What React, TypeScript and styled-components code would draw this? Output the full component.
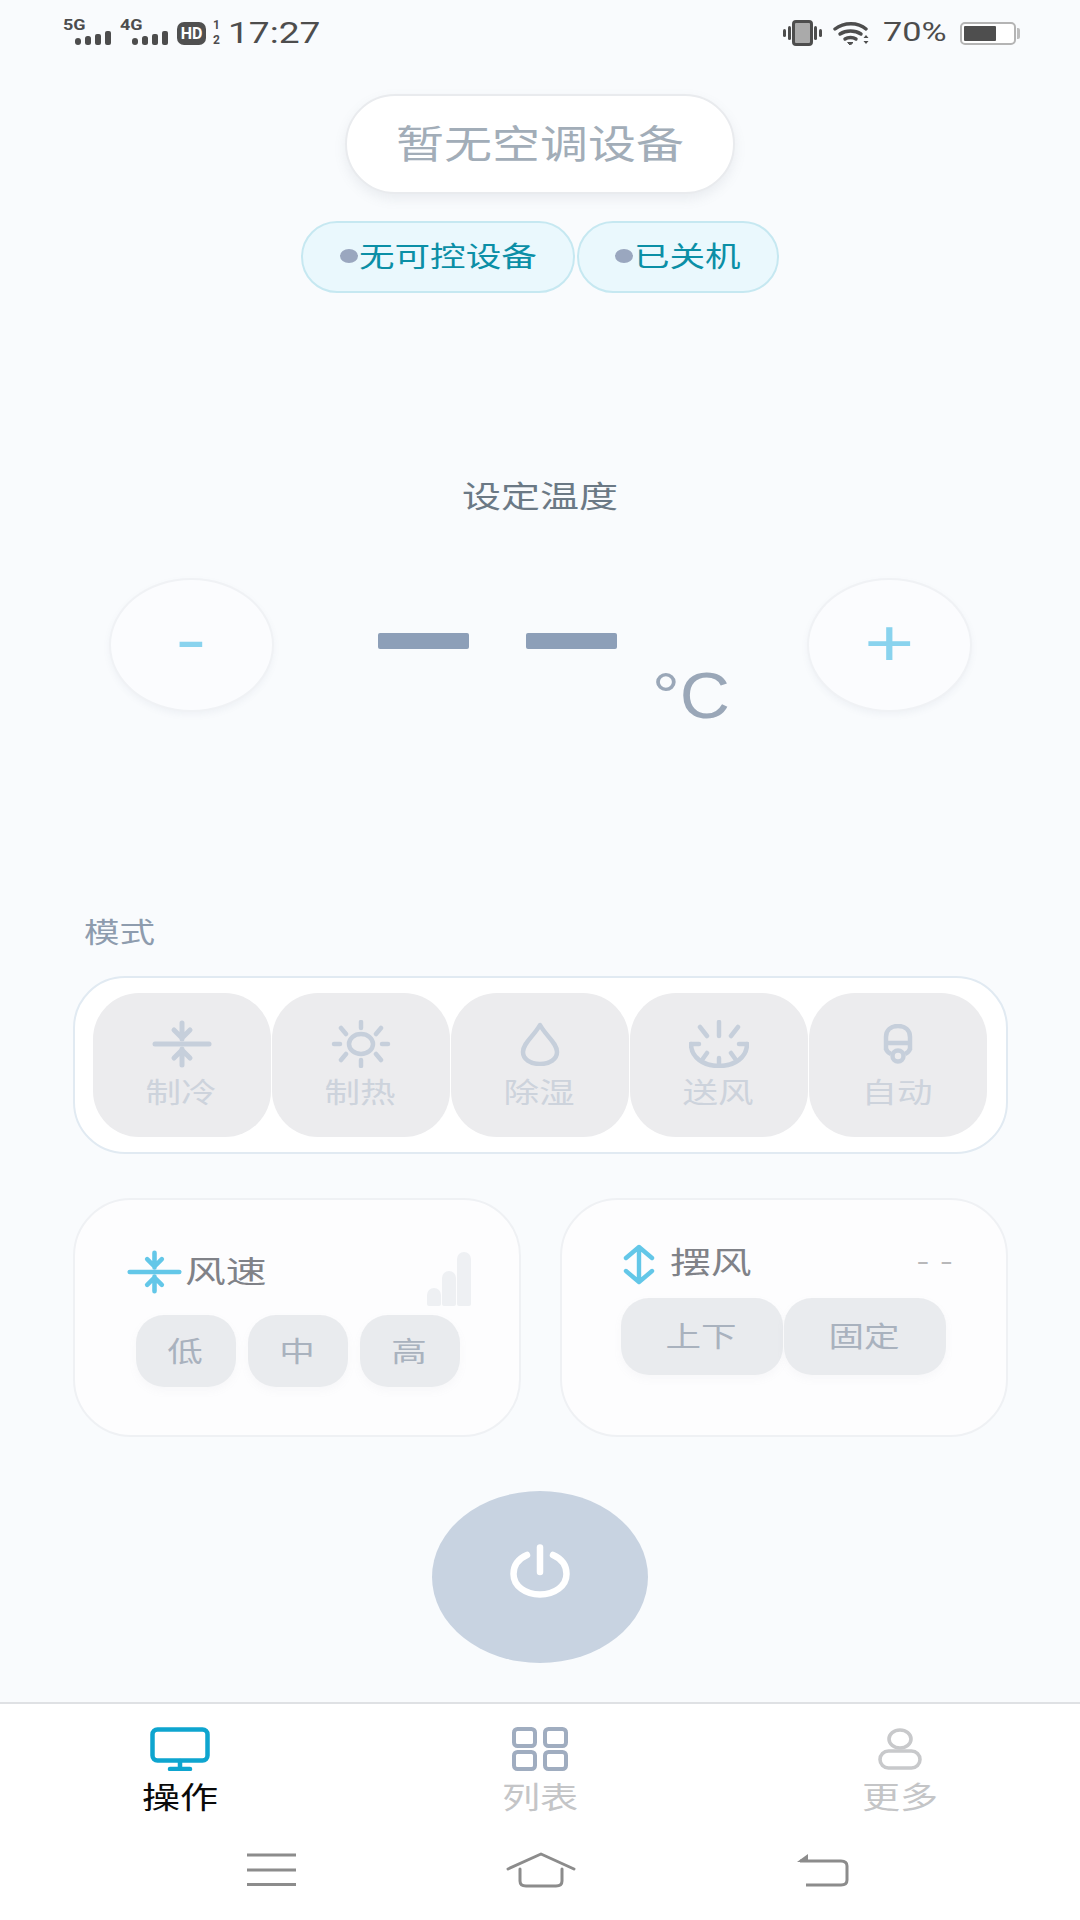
import React from "react";
import styled, { createGlobalStyle } from "styled-components";

const Global = createGlobalStyle`
  html, body { margin: 0; padding: 0; background: #f9fbfd; }
  * { box-sizing: border-box; }
  body { font-family: "Noto Sans CJK SC", "Noto Sans", sans-serif; }
`;

const Screen = styled.div`
  width: 1080px;
  height: 1920px;
  display: flex;
  flex-direction: column;
  overflow: hidden;
  background: #f9fbfd;
`;

/* wide glyphs: the source picture is stretched horizontally */
const Wide = styled.span<{ $x?: number; $origin?: string }>`
  display: inline-block;
  white-space: nowrap;
  transform: scaleX(${(p) => p.$x ?? 1.27});
  transform-origin: ${(p) => p.$origin ?? "center"};
`;

/* ---------- status bar ---------- */
const StatusBar = styled.div`
  height: 66px;
  flex: none;
  display: flex;
  align-items: center;
  padding: 0 60px 0 63px;
  color: #4d4d4d;
  font-family: Roboto, "Liberation Sans", sans-serif;
`;
const SignalGroup = styled.div`
  width: 57px;
  display: flex;
  flex-direction: column;
  margin-top: -2px;
`;
const NetLabel = styled(Wide)`
  align-self: flex-start;
  font-size: 15px;
  line-height: 12px;
  font-weight: 700;
  height: 12px;
`;
const SignalBars = styled.svg`
  margin-left: 12px;
  display: block;
`;
const HdBadge = styled.span`
  width: 29px;
  height: 23px;
  flex: none;
  border-radius: 7px;
  background: #505050;
  color: #fff;
  font-size: 16px;
  line-height: 23px;
  font-weight: 700;
  text-align: center;
  margin-right: 6px;
`;
const SimStack = styled.span`
  display: flex;
  flex-direction: column;
  width: 9px;
  font-size: 12px;
  line-height: 15px;
  font-weight: 700;
  text-align: center;
`;
const Clock = styled(Wide)`
  margin-left: 7px;
  font-size: 29px;
  line-height: 30px;
`;
const StatusRight = styled.div`
  margin-left: auto;
  display: flex;
  align-items: center;
`;
const Percent = styled(Wide)`
  width: 62px;
  margin: 0 15px 0 12px;
  font-size: 25px;
  line-height: 30px;
`;
const BatteryBody = styled.div`
  width: 56px;
  height: 23px;
  border: 2px solid #b4b4b4;
  border-radius: 5px;
  padding: 2px;
  background: #fff;
`;
const BatteryFill = styled.div`
  height: 100%;
  background: #4e4e4e;
  border-radius: 1px;
`;
const BatteryNub = styled.div`
  width: 3px;
  height: 11px;
  margin-left: 1px;
  background: #bdbdbd;
  border-radius: 0 2px 2px 0;
`;

/* ---------- main ---------- */
const Main = styled.main`
  flex: 1;
  display: flex;
  flex-direction: column;
  align-items: center;
`;
const TitlePill = styled.div`
  margin-top: 28px;
  width: 390px;
  height: 100px;
  padding-bottom: 7px;
  border-radius: 50px;
  background: #fff;
  border: 2px solid #e9ebee;
  box-shadow: 0 5px 12px rgba(120, 130, 150, 0.12);
  display: flex;
  align-items: center;
  justify-content: center;
  color: #a2adb8;
  font-size: 39px;
  line-height: 50px;
`;
const ChipRow = styled.div`
  margin-top: 27px;
  display: flex;
  gap: 2px;
`;
const Chip = styled.div<{ $w: number }>`
  width: ${(p) => p.$w}px;
  height: 72px;
  padding-bottom: 4px;
  border-radius: 36px;
  background: #eaf8fd;
  border: 2px solid #c6e8f1;
  display: flex;
  align-items: center;
  justify-content: center;
  color: #0b8fa6;
  font-size: 28px;
`;
const ChipDot = styled.span`
  width: 18px;
  height: 14px;
  border-radius: 50%;
  background: #9aa7bf;
  flex: none;
  margin-top: 2px;
`;
const ChipText = styled(Wide)<{ $w: number }>`
  width: ${(p) => p.$w}px;
  margin-left: 1px;
`;
const TempLabel = styled.div`
  margin-top: 181px;
  height: 40px;
  line-height: 40px;
  font-size: 30px;
  color: #6b7985;
`;
const TempRow = styled.div`
  margin-top: 64px;
  width: 863px;
  height: 134px;
  display: flex;
  align-items: flex-start;
`;
const RoundButton = styled.div<{ $lift: number }>`
  width: 165px;
  height: 134px;
  flex: none;
  padding-bottom: ${(p) => p.$lift}px;
  border-radius: 50%;
  background: #fbfcfe;
  border: 2px solid #f0f2f5;
  box-shadow: 0 3px 6px rgba(120, 130, 150, 0.07);
  display: flex;
  align-items: center;
  justify-content: center;
  color: #89d3ee;
  font-family: "Liberation Sans", sans-serif;
  font-size: 66px;
  line-height: 80px;
`;
const DashGroup = styled.div`
  margin: 55px 0 0 104px;
  display: flex;
  gap: 57px;
`;
const Dash = styled.div`
  width: 91px;
  height: 16px;
  border-radius: 2px;
  background: #8d9fb8;
`;
const Unit = styled(Wide)`
  margin: 81px auto 0 35px;
  font-family: "Liberation Sans", sans-serif;
  font-size: 65px;
  line-height: 74px;
  color: #9aa7b8;
`;
const SectionLabel = styled.div`
  margin-top: 199px;
  width: 935px;
  height: 40px;
  padding-left: 11px;
  line-height: 40px;
  font-size: 28px;
  color: #8e9cae;
`;
const ModeCard = styled.div`
  margin-top: 25px;
  width: 935px;
  height: 178px;
  padding: 15px 18px;
  border-radius: 52px;
  background: #fff;
  border: 2px solid #e1eaf2;
  display: grid;
  grid-template-columns: repeat(5, 178px);
  gap: 1px;
`;
const ModeItem = styled.div`
  height: 144px;
  padding-top: 27px;
  border-radius: 46px;
  background: #ececee;
  display: flex;
  flex-direction: column;
  align-items: center;
`;
const ModeIcon = styled.div`
  height: 48px;
  display: flex;
  align-items: center;
  justify-content: center;
`;
const ModeText = styled.div`
  margin-top: 5px;
  font-size: 28px;
  line-height: 36px;
  color: #cdd3dc;
`;
const CardRow = styled.div`
  margin-top: 44px;
  width: 935px;
  display: flex;
  justify-content: space-between;
`;
const ControlCard = styled.div`
  width: 448px;
  height: 239px;
  border-radius: 58px;
  background: #fdfdfe;
  border: 2px solid #eff1f4;
`;
const CardHead = styled.div<{ $top: number; $left: number; $right: number; $h: number; $gap: number }>`
  margin: ${(p) => p.$top}px ${(p) => p.$right}px 0 ${(p) => p.$left}px;
  height: ${(p) => p.$h}px;
  display: flex;
  align-items: flex-start;
  gap: ${(p) => p.$gap}px;
`;
const CardTitle = styled(Wide)<{ $up: number }>`
  margin-top: -${(p) => p.$up}px;
  font-size: 30px;
  line-height: 44px;
  color: #808288;
  transform-origin: left;
  width: 60px;
`;
const CardValue = styled(Wide)`
  margin-left: auto;
  font-family: Roboto, sans-serif;
  font-size: 28px;
  line-height: 36px;
  letter-spacing: 9px;
  color: #b8b8ba;
`;
const LevelBars = styled.div`
  margin: 2px 0 0 auto;
  height: 54px;
  display: flex;
  align-items: flex-end;
  gap: 1px;
`;
const LevelBar = styled.div<{ $h: number }>`
  width: 14px;
  height: ${(p) => p.$h}px;
  border-radius: 7px 7px 2px 2px;
  background: #eef0f3;
`;
const OptionRow = styled.div<{ $left: number; $gap: number; $top: number }>`
  margin: ${(p) => p.$top}px 0 0 ${(p) => p.$left}px;
  display: flex;
  gap: ${(p) => p.$gap}px;
`;
const OptionButton = styled.div<{ $w: number; $h: number }>`
  width: ${(p) => p.$w}px;
  height: ${(p) => p.$h}px;
  padding-bottom: 3px;
  border-radius: 28px;
  background: #e9ebee;
  box-shadow: 0 4px 8px rgba(150, 160, 175, 0.06);
  display: flex;
  align-items: center;
  justify-content: center;
  font-size: 28px;
  color: #a9b2be;
`;
const PowerButton = styled.div`
  margin-top: 54px;
  width: 216px;
  height: 172px;
  padding-bottom: 12px;
  border-radius: 50%;
  background: #c8d3e1;
  display: flex;
  align-items: center;
  justify-content: center;
`;

/* ---------- bottom ---------- */
const BottomArea = styled.footer`
  flex: none;
  height: 218px;
  background: #fff;
  border-top: 2px solid #dfe1e4;
`;
const TabRow = styled.nav`
  padding-top: 23px;
  display: grid;
  grid-template-columns: repeat(3, 360px);
`;
const Tab = styled.div`
  display: flex;
  flex-direction: column;
  align-items: center;
`;
const TabIcon = styled.div`
  height: 44px;
  display: flex;
  align-items: center;
`;
const TabLabel = styled(Wide)<{ $active?: boolean }>`
  margin-top: 4px;
  font-size: 30px;
  line-height: 40px;
  color: ${(p) => (p.$active ? "#0a0a0a" : "#c4c5c7")};
`;
const SystemNav = styled.div`
  margin-top: 37px;
  padding-left: 247px;
  display: flex;
  align-items: center;
  gap: 210px;
  height: 36px;
`;
const BackIcon = styled.svg`
  margin-left: 11px;
`;
const WifiIcon = styled.svg`
  margin-left: 11px;
`;

/* ---------- icons ---------- */
const Cool = ({ c, w = 60, h = 48, s = 5 }: { c: string; w?: number; h?: number; s?: number }) => (
  <svg width={w} height={h} viewBox="0 0 60 48" fill="none" stroke={c} strokeWidth={s} strokeLinecap="round" strokeLinejoin="round">
    <path d="M3 24H57" />
    <path d="M30 3V19M22 10l8 8 8-8" />
    <path d="M30 45V29M22 38l8-8 8 8" />
  </svg>
);
const Sun = ({ c }: { c: string }) => (
  <svg width="60" height="48" viewBox="0 0 60 48" fill="none" stroke={c} strokeWidth="4.500" strokeLinecap="round">
    <ellipse cx="30" cy="24" rx="12" ry="10" />
    <path d="M30 2V8M30 40V46M3 24H9M51 24H57M10 8l5 6M50 8l-5 6M10 40l5-6M50 40l-5-6" />
  </svg>
);
const Drop = ({ c }: { c: string }) => (
  <svg width="40" height="44" viewBox="0 0 40 44" fill="none" stroke={c} strokeWidth="4.500" strokeLinejoin="round">
    <path d="M20 3C14 14 3 21 3 30c0 7 7 12 17 12s17-5 17-12C37 21 26 14 20 3Z" />
  </svg>
);
const Fan = ({ c }: { c: string }) => (
  <svg width="60" height="48" viewBox="0 0 60 48" fill="none" stroke={c} strokeWidth="4.500" strokeLinecap="round">
    <path d="M30 2V16M11 7l7 9M49 7l-7 9" />
    <path d="M2 24c0 13 12 22 28 22s28-9 28-22" />
    <path d="M2 24H10M50 24H58M30 46V38M13 40l5-7M47 40l-5-7" />
  </svg>
);
const Auto = ({ c }: { c: string }) => (
  <svg width="30" height="40" viewBox="0 0 30 40" fill="none" stroke={c} strokeWidth="4.500">
    <path d="M3 26V13C3 6 8 2 15 2s12 4 12 11v13" />
    <path d="M3 19H27" />
    <path d="M3 25c1 3 3 4 5 5M27 25c-1 3-3 4-5 5" />
    <circle cx="15" cy="32" r="5.500" />
  </svg>
);

const Signal = () => (
  <SignalBars width="36" height="14" viewBox="0 0 36 14" fill="#4d4d4d">
    <rect x="0" y="7" width="6" height="7" rx="3" />
    <rect x="10" y="5" width="6" height="9" rx="2.500" />
    <rect x="20" y="3" width="6" height="11" rx="2" />
    <rect x="30" y="0" width="6" height="14" rx="2" />
  </SignalBars>
);

const modeColor = "#c6cfdb";
const modes = [
  { name: "制冷", icon: <Cool c={modeColor} /> },
  { name: "制热", icon: <Sun c={modeColor} /> },
  { name: "除湿", icon: <Drop c={modeColor} /> },
  { name: "送风", icon: <Fan c={modeColor} /> },
  { name: "自动", icon: <Auto c={modeColor} /> },
];

export default function App() {
  return (
    <Screen>
      <Global />
      <StatusBar>
        <SignalGroup>
          <NetLabel $x={1.2} $origin="left">5G</NetLabel>
          <Signal />
        </SignalGroup>
        <SignalGroup>
          <NetLabel $x={1.2} $origin="left">4G</NetLabel>
          <Signal />
        </SignalGroup>
        <HdBadge>HD</HdBadge>
        <SimStack>
          <span>1</span>
          <span>2</span>
        </SimStack>
        <Clock $x={1.28} $origin="left">17:27</Clock>
        <StatusRight>
          <svg width="39" height="26" viewBox="0 0 39 26" fill="#4d4d4d">
            <rect x="0" y="9" width="3" height="8" rx="1.500" />
            <rect x="5" y="6" width="3" height="14" rx="1.500" />
            <rect x="10.500" y="1.500" width="18" height="23" rx="2.500" fill="#aaa" stroke="#4d4d4d" strokeWidth="3" />
            <rect x="31" y="6" width="3" height="14" rx="1.500" />
            <rect x="36" y="9" width="3" height="8" rx="1.500" />
          </svg>
          <WifiIcon width="38" height="24" viewBox="0 0 38 24" fill="none" stroke="#4d4d4d" strokeWidth="3.400" strokeLinecap="round">
            <path d="M2 8C11 1 25 1 33 8" />
            <path d="M7 13c6-4 15-4 21 0" />
            <path d="M12 18c3-2 8-2 11 0" />
            <path d="M15 21.500h5l-2.500 2.500Z" fill="#4d4d4d" strokeWidth="1" />
            <path d="M33 14l-2.500 3h5ZM33 23l-2.500-3h5Z" fill="#4d4d4d" stroke="none" />
          </WifiIcon>
          <Percent $x={1.37} $origin="left">70%</Percent>
          <BatteryBody>
            <BatteryFill style={{ width: "66%" }} />
          </BatteryBody>
          <BatteryNub />
        </StatusRight>
      </StatusBar>

      <Main>
        <TitlePill>
          <Wide $x={1.23}>暂无空调设备</Wide>
        </TitlePill>
        <ChipRow>
          <Chip $w={274}>
            <ChipDot />
            <ChipText $x={1.27} $w={178} $origin="left">无可控设备</ChipText>
          </Chip>
          <Chip $w={202}>
            <ChipDot />
            <ChipText $x={1.27} $w={107} $origin="left">已关机</ChipText>
          </Chip>
        </ChipRow>
        <TempLabel>
          <Wide $x={1.3}>设定温度</Wide>
        </TempLabel>
        <TempRow>
          <RoundButton $lift={12}>
            <Wide $x={1.4}>-</Wide>
          </RoundButton>
          <DashGroup>
            <Dash />
            <Dash />
          </DashGroup>
          <Unit $x={1.07} $origin="left">°C</Unit>
          <RoundButton $lift={5}>
            <Wide $x={1.3}>+</Wide>
          </RoundButton>
        </TempRow>
        <SectionLabel>
          <Wide $origin="left">模式</Wide>
        </SectionLabel>
        <ModeCard>
          {modes.map((m) => (
            <ModeItem key={m.name}>
              <ModeIcon>{m.icon}</ModeIcon>
              <ModeText>
                <Wide>{m.name}</Wide>
              </ModeText>
            </ModeItem>
          ))}
        </ModeCard>
        <CardRow>
          <ControlCard>
            <CardHead $top={50} $left={52} $right={48} $h={56} $gap={3}>
              <Cool c="#63c7e8" w={55} h={44} s={5} />
              <CardTitle $x={1.36} $up={3}>风速</CardTitle>
              <LevelBars>
                <LevelBar $h={18} />
                <LevelBar $h={35} />
                <LevelBar $h={54} />
              </LevelBars>
            </CardHead>
            <OptionRow $top={9} $left={61} $gap={12}>
              {["低", "中", "高"].map((t) => (
                <OptionButton key={t} $w={100} $h={72}>
                  <Wide>{t}</Wide>
                </OptionButton>
              ))}
            </OptionRow>
          </ControlCard>
          <ControlCard>
            <CardHead $top={44} $left={61} $right={41} $h={54} $gap={15}>
              <svg width="32" height="41" viewBox="0 0 32 41" fill="none" stroke="#63c7e8" strokeWidth="4.400" strokeLinecap="round" strokeLinejoin="round">
                <path d="M16 3V38M3 14L16 3l13 11M3 27l13 11 13-11" />
              </svg>
              <CardTitle $x={1.36} $up={6}>摆风</CardTitle>
              <CardValue $x={1.4} $origin="right">--</CardValue>
            </CardHead>
            <OptionRow $top={0} $left={59} $gap={1}>
              {["上下", "固定"].map((t) => (
                <OptionButton key={t} $w={162} $h={77}>
                  <Wide>{t}</Wide>
                </OptionButton>
              ))}
            </OptionRow>
          </ControlCard>
        </CardRow>
        <PowerButton>
          <svg width="60" height="54" viewBox="0 0 60 54" fill="none" stroke="#fff" strokeWidth="6.500" strokeLinecap="round">
            <path d="M17 11C8 15 3.500 22 3.500 30c0 12 12 20.500 26.500 20.500S56.500 42 56.500 30c0-8-4.500-15-13.500-19" />
            <path d="M30 3.500V28" />
          </svg>
        </PowerButton>
      </Main>

      <BottomArea>
        <TabRow>
          <Tab>
            <TabIcon>
              <svg width="60" height="44" viewBox="0 0 60 44" fill="none" stroke="#0ea5cf" strokeWidth="4.500" strokeLinecap="round">
                <rect x="2.500" y="2.500" width="55" height="31" rx="5" />
                <path d="M30 34V42M20 42H40" />
              </svg>
            </TabIcon>
            <TabLabel $active>操作</TabLabel>
          </Tab>
          <Tab>
            <TabIcon>
              <svg width="56" height="44" viewBox="0 0 56 44" fill="none" stroke="#a0adc0" strokeWidth="4">
                <rect x="2" y="2" width="21" height="17" rx="3.500" />
                <rect x="33" y="2" width="21" height="17" rx="3.500" />
                <rect x="2" y="25" width="21" height="17" rx="3.500" />
                <rect x="33" y="25" width="21" height="17" rx="3.500" />
              </svg>
            </TabIcon>
            <TabLabel>列表</TabLabel>
          </Tab>
          <Tab>
            <TabIcon>
              <svg width="44" height="42" viewBox="0 0 44 42" fill="none" stroke="#c8c9cb" strokeWidth="3.600">
                <ellipse cx="22" cy="11" rx="11" ry="9" />
                <rect x="2" y="23" width="40" height="17" rx="8.500" />
              </svg>
            </TabIcon>
            <TabLabel>更多</TabLabel>
          </Tab>
        </TabRow>
        <SystemNav>
          <svg width="49" height="34" viewBox="0 0 49 34" stroke="#8c8c8c" strokeWidth="3">
            <path d="M0 2H49M0 17H49M0 31.500H49" />
          </svg>
          <svg width="70" height="36" viewBox="0 0 70 36" fill="none" stroke="#8c8c8c" strokeWidth="3" strokeLinecap="round" strokeLinejoin="round">
            <path d="M2 17L35 2l33 15" />
            <path d="M14 17V29c0 3 2 5 6 5h30c4 0 6-2 6-5V17" />
          </svg>
          <BackIcon width="52" height="34" viewBox="0 0 52 34" fill="none" stroke="#8c8c8c" strokeWidth="3">
            <path d="M3 8H44c4 0 6 2 6 5v14c0 3-2 5-6 5H9" />
            <path d="M0 9L11 1V9Z" fill="#8c8c8c" stroke="none" />
          </BackIcon>
        </SystemNav>
      </BottomArea>
    </Screen>
  );
}
